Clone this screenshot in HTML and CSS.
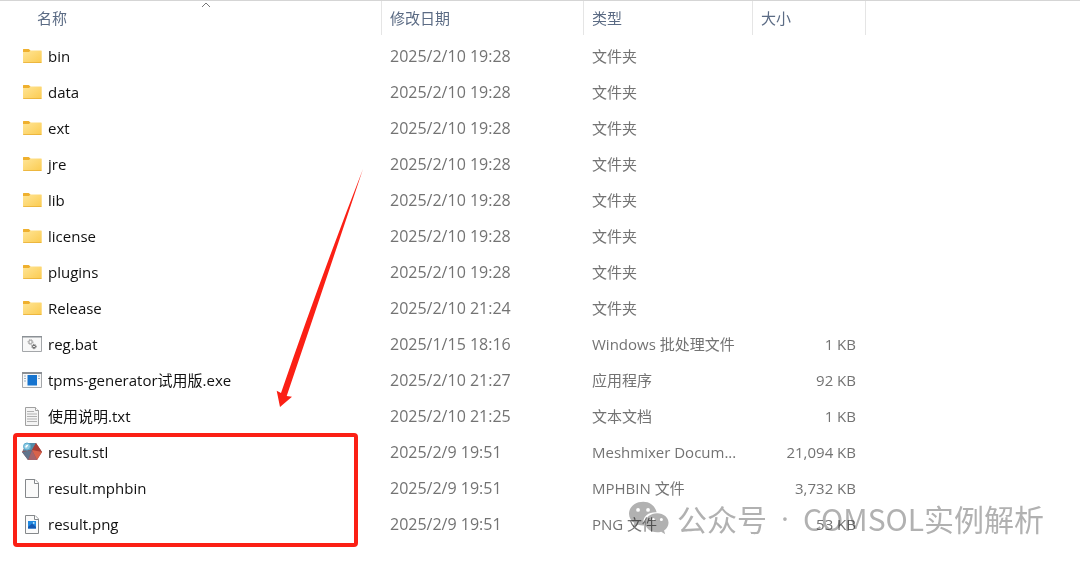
FILE: index.html
```html
<!DOCTYPE html>
<html lang="zh-CN">
<head>
    <meta charset="UTF-8">
    <title>文件列表</title>
    <link rel="stylesheet" href="styles.css">
</head>

<body>
    <!-- Shared icons -->
    <svg class="sprite" aria-hidden="true">
        <defs>
            <linearGradient id="folder-fill" x1="0" y1="0" x2="1" y2="1">
                <stop offset="0" stop-color="#ffe596"/>
                <stop offset="1" stop-color="#fbcb50"/>
            </linearGradient>
        </defs>
        <symbol id="icon-folder" viewBox="0 0 20 20">
            <path d="M1 3.500q0-.5.5-.5h5.200l1.800 1.500V7H1z" fill="#efb02e"/>
            <path d="M1 6h6l1.500-1.500h10.700q.5 0 .5.5v11.300q0 .7-.7.7H1.700Q1 17 1 16.300z" fill="url(#folder-fill)"/>
            <path d="M1 16.300h18.700q0 .7-.7.7H1.700Q1 17 1 16.300z" fill="#e8af35"/>
        </symbol>
        <symbol id="icon-bat" viewBox="0 0 20 20">
            <path d="M.5 2.500h19v15H.5z" fill="#f8f8f8" stroke="#a4a7aa"/>
            <path d="M0 2h20v1.500H0z" fill="#8b9095"/>
            <circle cx="8.500" cy="8" r="1.700" fill="none" stroke="#9a9a9a"/>
            <circle cx="8.500" cy="8" r="2.500" fill="none" stroke="#9a9a9a" stroke-dasharray="1 .96"/>
            <circle cx="12" cy="12.500" r="1.400" fill="none" stroke="#555"/>
            <circle cx="12" cy="12.500" r="2.200" fill="none" stroke="#555" stroke-dasharray=".9 .83"/>
        </symbol>
        <symbol id="icon-exe" viewBox="0 0 20 20">
            <path d="M.5 2.500h19v15H.5z" fill="#f8f8f8" stroke="#a4a7aa"/>
            <path d="M0 2h20v2H0z" fill="#8b9095"/>
            <path d="M5.500 5h9.500v10.500H5.500z" fill="#1674cf"/>
            <path d="M2 6h2M2 8.500h2M2 11h2M16 6h2M16 8.500h2" stroke="#9aafc2"/>
        </symbol>
        <symbol id="icon-txt" viewBox="0 0 20 20">
            <path d="M3.500 1.500h10l3 3v15h-13z" fill="#f4f4f4" stroke="#a0a0a0"/>
            <path d="M13.500 1.500v3h3" fill="#fff" stroke="#a0a0a0"/>
            <path d="M5 5.500h7M5 8h10M5 10.500h10M5 13h10M5 15.500h10" stroke="#b0b0b0"/>
        </symbol>
        <symbol id="icon-stl" viewBox="0 0 20 20">
            <path d="M5 1h9l6 9-5 8H6l-6-8z" fill="#9b4c4b"/>
            <path d="M5 1h9l-4 7-9 1z" fill="#548ba8"/>
            <path d="M14 1l6 9-10-2z" fill="#a83d36"/>
            <path d="M20 10l-5 8-5-10z" fill="#d7634b"/>
            <path d="M10 8l5 10H6z" fill="#a5646b"/>
            <path d="M0 10l10-2-4 10z" fill="#61748c"/>
            <circle cx="5" cy="4.500" r="3.500" fill="#8fcbe3" stroke="#5aa9cd"/>
            <path d="M4 5.500q0-2 2-2" fill="none" stroke="#fff" stroke-width="1.500"/>
        </symbol>
        <symbol id="icon-file" viewBox="0 0 20 20">
            <path d="M3.500 1.500h9.500l3.500 3.500v14.500h-13z" fill="#fafafa" stroke="#85888b"/>
            <path d="M12.500 1.500v4h4" fill="#fff" stroke="#85888b"/>
        </symbol>
        <symbol id="icon-png" viewBox="0 0 20 20">
            <path d="M3.500 1.500h9.500l3.500 3.500v14.500h-13z" fill="#fafafa" stroke="#85888b"/>
            <path d="M12.500 1.500v4h4" fill="#fff" stroke="#85888b"/>
            <path d="M6 7h8v7.500H6z" fill="#2189e0"/>
            <path d="M6 14.500v-1.500l4-3.500 4 3.500v1.500z" fill="#1558b0"/>
            <circle cx="11.700" cy="8.900" r=".9" fill="#c8efff"/>
        </symbol>
    </svg>

    <main class="explorer">
        <table class="file-table">
            <colgroup>
                <col class="col-name">
                <col class="col-date">
                <col class="col-type">
                <col class="col-size">
                <col>
            </colgroup>
            <thead>
                <tr>
                    <th class="name">名称
                        <svg class="sort-arrow" viewBox="0 0 10 6"><path d="M1 5l4-4 4 4" fill="none" stroke="#777"/></svg>
                    </th>
                    <th>修改日期</th>
                    <th>类型</th>
                    <th>大小</th>
                    <td></td>
                </tr>
            </thead>
            <tbody>
                <tr><td class="name"><svg class="icon"><use href="#icon-folder"/></svg>bin</td><td class="date">2025/2/10 19:28</td><td>文件夹</td><td class="size"></td></tr>
                <tr><td class="name"><svg class="icon"><use href="#icon-folder"/></svg>data</td><td class="date">2025/2/10 19:28</td><td>文件夹</td><td class="size"></td></tr>
                <tr><td class="name"><svg class="icon"><use href="#icon-folder"/></svg>ext</td><td class="date">2025/2/10 19:28</td><td>文件夹</td><td class="size"></td></tr>
                <tr><td class="name"><svg class="icon"><use href="#icon-folder"/></svg>jre</td><td class="date">2025/2/10 19:28</td><td>文件夹</td><td class="size"></td></tr>
                <tr><td class="name"><svg class="icon"><use href="#icon-folder"/></svg>lib</td><td class="date">2025/2/10 19:28</td><td>文件夹</td><td class="size"></td></tr>
                <tr><td class="name"><svg class="icon"><use href="#icon-folder"/></svg>license</td><td class="date">2025/2/10 19:28</td><td>文件夹</td><td class="size"></td></tr>
                <tr><td class="name"><svg class="icon"><use href="#icon-folder"/></svg>plugins</td><td class="date">2025/2/10 19:28</td><td>文件夹</td><td class="size"></td></tr>
                <tr><td class="name"><svg class="icon"><use href="#icon-folder"/></svg>Release</td><td class="date">2025/2/10 21:24</td><td>文件夹</td><td class="size"></td></tr>
                <tr><td class="name"><svg class="icon"><use href="#icon-bat"/></svg>reg.bat</td><td class="date">2025/1/15 18:16</td><td>Windows 批处理文件</td><td class="size">1 KB</td></tr>
                <tr><td class="name"><svg class="icon"><use href="#icon-exe"/></svg>tpms-generator试用版.exe</td><td class="date">2025/2/10 21:27</td><td>应用程序</td><td class="size">92 KB</td></tr>
                <tr><td class="name"><svg class="icon"><use href="#icon-txt"/></svg>使用说明.txt</td><td class="date">2025/2/10 21:25</td><td>文本文档</td><td class="size">1 KB</td></tr>
                <tr><td class="name"><svg class="icon"><use href="#icon-stl"/></svg>result.stl</td><td class="date">2025/2/9 19:51</td><td>Meshmixer Docum...</td><td class="size">21,094 KB</td></tr>
                <tr><td class="name"><svg class="icon"><use href="#icon-file"/></svg>result.mphbin</td><td class="date">2025/2/9 19:51</td><td>MPHBIN 文件</td><td class="size">3,732 KB</td></tr>
                <tr><td class="name"><svg class="icon"><use href="#icon-png"/></svg>result.png</td><td class="date">2025/2/9 19:51</td><td>PNG 文件</td><td class="size">53 KB</td></tr>
            </tbody>
        </table>

        <!-- Annotations over the list -->
        <div class="highlight-box"></div>
        <svg class="arrow" viewBox="0 0 90 242">
            <path d="M87 1Q46 106 5 225L.7 222.700 4 239 16 228.700 10.700 228Q48 118 87 1z" fill="#fb2015"/>
        </svg>

        <div class="watermark">
            <svg class="wechat" viewBox="0 0 42 34">
                <path fill-rule="evenodd" d="M15 0C6.500 0 0 5.500 0 12.500c0 4 2.200 7.500 5.500 9.700L4 27l5.500-2.800c2 .6 4 .8 6.300.7C13 17 19 10.500 29 11 27.500 4.500 22 0 15 0zM9.500 6.500a2 2 0 1 1 0 4 2 2 0 0 1 0-4zm10.500 0a2 2 0 1 1 0 4 2 2 0 0 1 0-4z"/>
                <path fill-rule="evenodd" d="M29.500 12C22.500 12 17 16.500 17 22s5.500 10 12.500 10c1.500 0 3-.2 4.300-.6L38 34l-1.200-4c3-1.800 4.700-4.700 4.700-8 0-5.500-5-10-12-10zM25.500 17a1.600 1.600 0 1 1 0 3.200 1.600 1.600 0 0 1 0-3.200zm8.500 0a1.600 1.600 0 1 1 0 3.200 1.600 1.600 0 0 1 0-3.200z"/>
            </svg>
            <span>公众号</span>
            <span class="dot">·</span>
            <span>COMSOL实例解析</span>
        </div>
    </main>
</body>
</html>
```
FILE: styles.css
```css
body {
    margin: 0;
    background-color: #fff;
    font-family: "Open Sans", "Noto Sans CJK SC", sans-serif;
    font-size: 15px;
    color: #737373;
}

.sprite {
    position: absolute;
    width: 0;
    height: 0;
}

.explorer {
    position: relative;
    padding-bottom: 16px;
    border-top: 1px solid #d5d5d5;
}

.file-table {
    width: 100%;
    table-layout: fixed;
    border-collapse: separate;
    border-spacing: 0;
}

.col-name {
    width: 382px;
}

.col-date {
    width: 202px;
}

.col-type {
    width: 169px;
}

.col-size {
    width: 113px;
}

.file-table th,
.file-table td {
    box-sizing: border-box;
    height: 36px;
    padding: 0 0 0 8px;
    line-height: 24px;
    text-align: left;
    vertical-align: middle;
    white-space: nowrap;
}

.file-table th {
    height: 34px;
    border-right: 1px solid #e5e5e5;
    font-weight: normal;
    color: #5b6b84;
}

.file-table thead td {
    height: 34px;
}

.file-table thead::after {
    content: "";
    display: table-row;
    height: 3px;
}

.file-table th.name {
    position: relative;
    padding-left: 37px;
}

.file-table td.name {
    padding-left: 22px;
    color: #111;
}

.file-table td.date {
    font-size: 16px;
}

.file-table td.size {
    padding-right: 10px;
    text-align: right;
}

.icon {
    width: 20px;
    height: 20px;
    margin-right: 6px;
    vertical-align: -4px;
}

.sort-arrow {
    position: absolute;
    top: 1px;
    left: 201px;
    width: 10px;
    height: 6px;
}

.highlight-box {
    position: absolute;
    top: 432px;
    left: 13px;
    box-sizing: border-box;
    width: 345px;
    height: 114px;
    border: 4px solid #fb2015;
    border-radius: 4px;
}

.arrow {
    position: absolute;
    top: 167px;
    left: 276px;
    width: 90px;
    height: 242px;
}

.watermark {
    position: absolute;
    top: 495px;
    left: 629px;
    display: flex;
    align-items: center;
    gap: 8px;
    font-family: "Noto Sans CJK SC", sans-serif;
    font-size: 30px;
    line-height: 44px;
    white-space: nowrap;
    color: #b1b1b1;
    mix-blend-mode: multiply;
}

.watermark .dot {
    padding: 0 6px;
    font-family: "Open Sans", sans-serif;
}

.wechat {
    width: 40px;
    height: 34px;
    fill: #b1b1b1;
}
```
